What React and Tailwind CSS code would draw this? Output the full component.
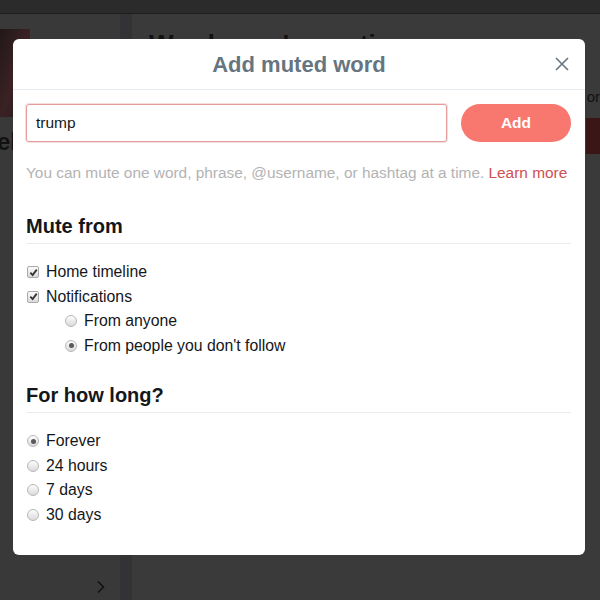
import React from "react";

function Check({ checked }) {
    return (
        <span className="flex h-[12px] w-[12px] items-center justify-center rounded-[2px] border border-[#a9a9a9] bg-gradient-to-b from-[#fafafa] to-[#dcdcdc]">
            {checked && (
                <svg width="9" height="9" viewBox="0 0 10 10">
                    <path
                        d="M1.5 5.2 L4 7.8 L8.6 1.8"
                        fill="none"
                        stroke="#333"
                        strokeWidth="2"
                    />
                </svg>
            )}
        </span>
    );
}

function Radio({ checked }) {
    return (
        <span className="flex h-[12px] w-[12px] items-center justify-center rounded-full border border-[#b8b8b8] bg-gradient-to-b from-[#fdfdfd] to-[#dadada]">
            {checked && (
                <span className="h-[5px] w-[5px] rounded-full bg-[#5a5a5a]" />
            )}
        </span>
    );
}

function Option({ children, radio, checked, indent }) {
    return (
        <div
            className={
                "flex h-[24.5px] items-center gap-[7px] text-[15.8px] text-[#14171a] " +
                (indent ? "pl-[39px]" : "pl-[1px]")
            }
        >
            {radio ? <Radio checked={checked} /> : <Check checked={checked} />}
            <span>{children}</span>
        </div>
    );
}

export default function App() {
    return (
        <div className="relative h-[600px] w-[600px] overflow-hidden bg-[#363638] font-['Liberation_Sans',Arial,sans-serif]">
            {/* page behind the overlay */}
            <div className="h-[14px] border-b border-[#1f1f1f] bg-[#2b2b2b]" />
            <div className="flex h-[586px]">
                <div className="flex w-[120px] flex-col bg-[#393939]">
                    <div className="mt-[15px] h-[88px] w-[30px] bg-gradient-to-br from-[#221819] via-[#3a2124] to-[#261d1f]" />
                    <div className="-ml-[3px] mt-[10px] text-[24px] font-bold leading-[30px] text-[#111]">
                        el
                    </div>
                    <div className="mt-auto mb-[38px] ml-[13px] border-t border-[#2e2e2e]" />
                    <div className="mb-[6px] flex justify-end pr-[14px] text-[#111]">
                        <svg width="10" height="14" viewBox="0 0 10 14">
                            <path
                                d="M2 1.5 L7.5 7 L2 12.5"
                                fill="none"
                                stroke="#111"
                                strokeWidth="1.6"
                            />
                        </svg>
                    </div>
                </div>
                <div className="w-[12px] bg-[#333335]" />
                <div className="flex flex-1 flex-col bg-[#3a3a3b]">
                    <div className="pt-[14px] pl-[17px] text-[26px] font-bold leading-[32px] text-[#111]">
                        Words you're muting
                    </div>
                    <div className="mt-[28px] text-right text-[15px] leading-[18px] text-[#111]">
                        or
                    </div>
                    <div className="mt-[12px] ml-auto h-[36px] w-[14px] bg-[#3b1616]" />
                </div>
            </div>

            {/* modal */}
            <div className="absolute left-[13px] top-[39px] h-[516px] w-[572px] rounded-[6px] bg-white">
                <div className="relative flex h-[51px] items-center justify-center border-b border-[#e6ecf0]">
                    <h2 className="text-[22px] font-bold text-[#66757f]">
                        Add muted word
                    </h2>
                    <button className="absolute right-[16px] top-[18px] text-[#66757f]">
                        <svg width="14" height="14" viewBox="0 0 14 14">
                            <path
                                d="M1 1 L13 13 M13 1 L1 13"
                                stroke="#66757f"
                                strokeWidth="1.6"
                            />
                        </svg>
                    </button>
                </div>

                <div className="pl-[13px] pr-[14px]">
                    <div className="mt-[14px] flex gap-[14px]">
                        <div className="flex h-[38px] flex-1 items-center rounded-[3px] border border-[#e39b9b] px-[9px] text-[15.5px] text-[#14171a] shadow-[0_0_0_1px_#f6dede]">
                            trump
                        </div>
                        <button className="h-[38px] w-[110px] rounded-full bg-[#f8776f] text-[15.5px] font-bold text-white">
                            Add
                        </button>
                    </div>

                    <p className="mt-[21px] text-[15.4px] leading-[20px] text-[#b3b3b3]">
                        You can mute one word, phrase, @username, or hashtag at
                        a time. <span className="text-[#cf4f52]">Learn more</span>
                    </p>

                    <h3 className="mt-[31px] border-b border-[#e6ecf0] pb-[5px] text-[20px] font-bold leading-[24px] text-[#14171a]">
                        Mute from
                    </h3>
                    <div className="mt-[16px]">
                        <Option checked>Home timeline</Option>
                        <Option checked>Notifications</Option>
                        <Option radio indent>
                            From anyone
                        </Option>
                        <Option radio indent checked>
                            From people you don't follow
                        </Option>
                    </div>

                    <h3 className="mt-[25px] border-b border-[#e6ecf0] pb-[5px] text-[20px] font-bold leading-[24px] text-[#14171a]">
                        For how long?
                    </h3>
                    <div className="mt-[16px]">
                        <Option radio checked>
                            Forever
                        </Option>
                        <Option radio>24 hours</Option>
                        <Option radio>7 days</Option>
                        <Option radio>30 days</Option>
                    </div>
                </div>
            </div>
        </div>
    );
}
